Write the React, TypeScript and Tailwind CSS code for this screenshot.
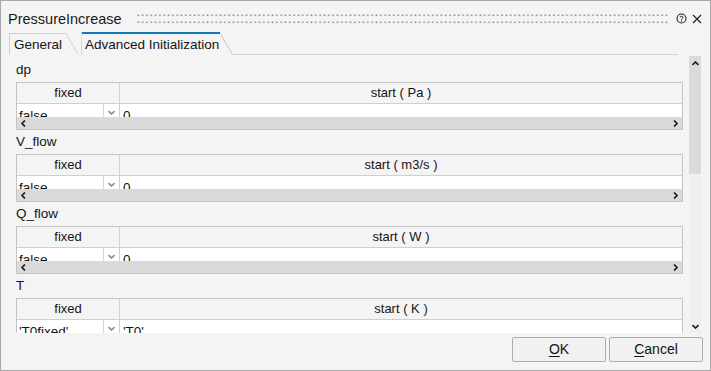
import React from "react";

const sections = [
  { name: "dp", unit: "Pa", fixed: "false", start: "0" },
  { name: "V_flow", unit: "m3/s", fixed: "false", start: "0" },
  { name: "Q_flow", unit: "W", fixed: "false", start: "0" },
  { name: "T", unit: "K", fixed: "'T0fixed'", start: "'T0'" },
];

function Chevron({ dir, className }: { dir: "left" | "right" | "up" | "down"; className?: string }) {
  const d =
    dir === "left"
      ? "M4 0.5 L1 3.5 L4 6.5"
      : dir === "right"
      ? "M1 0.5 L4 3.5 L1 6.5"
      : dir === "up"
      ? "M0.5 4 L3.5 1 L6.5 4"
      : "M0.5 1 L3.5 4 L6.5 1";
  const w = dir === "left" || dir === "right" ? 5 : 7;
  const h = dir === "left" || dir === "right" ? 7 : 5;
  return (
    <svg width={w} height={h} viewBox={`0 0 ${w} ${h}`} className={className}>
      <path d={d} fill="none" stroke="currentColor" strokeWidth="1.7" />
    </svg>
  );
}

function Section({ name, unit, fixed, start }: { name: string; unit: string; fixed: string; start: string }) {
  return (
    <div className="flex flex-col">
      <div className="h-[24px] flex items-center text-[13.5px] text-[#141414]">{name}</div>
      <div className="h-[48px] border border-[#c4c4c4] flex flex-col">
        <div className="flex h-[21px] border-b border-[#cfcfcf] text-[13px] text-[#141414]">
          <div className="w-[103px] border-r border-[#d2d2d2] flex items-center justify-center">fixed</div>
          <div className="flex-1 flex items-center justify-center">start ( {unit} )</div>
        </div>
        <div className="flex h-[13px] bg-white overflow-hidden text-[13.5px] text-[#141414] leading-[15px]">
          <div className="w-[87px] border-r border-[#d8d8d8] pl-[2px] pt-[4px] whitespace-nowrap">{fixed}</div>
          <div className="w-[16px] border-r border-[#cfcfcf] flex justify-center pt-[6px] text-[#8a8a8a]">
            <Chevron dir="down" />
          </div>
          <div className="flex-1 pl-[3px] pt-[4px] whitespace-nowrap">{start}</div>
        </div>
        <div className="h-[12px] bg-[#dadada] flex items-center justify-between pl-[4px] pr-[4px] text-[#202020]">
          <Chevron dir="left" />
          <Chevron dir="right" />
        </div>
      </div>
    </div>
  );
}

function Grip() {
  return (
    <svg className="w-full h-[10px]">
      <defs>
        <pattern id="dots" x="0" y="0" width="4.33" height="10" patternUnits="userSpaceOnUse">
          <rect x="0.5" y="0.5" width="1.6" height="1.6" fill="#8e8e8e" />
          <rect x="0.5" y="7.5" width="1.6" height="1.6" fill="#8e8e8e" />
        </pattern>
      </defs>
      <rect width="100%" height="10" fill="url(#dots)" />
    </svg>
  );
}

export default function App() {
  return (
    <div
      className="w-[711px] h-[371px] border border-[#a8a8a8] bg-[#f4f4f4] flex flex-col overflow-hidden"
      style={{ fontFamily: '"Liberation Sans", Arial, sans-serif' }}
    >
      {/* Title bar */}
      <div className="h-[31px] flex items-start shrink-0">
        <div className="pl-[7px] pt-[10px] text-[14.5px] leading-[17px] text-[#1a1a1a]">PressureIncrease</div>
        <div className="flex-1 mt-[13px] ml-[15px] mr-[8px]">
          <Grip />
        </div>
        <svg width="11" height="11" viewBox="0 0 11 11" className="mt-[12px] text-[#222]">
          <circle cx="5.5" cy="5.5" r="4.5" fill="none" stroke="currentColor" strokeWidth="1.1" />
          <path d="M4 4.4 C4 2.8 7 2.8 7 4.4 C7 5.5 5.5 5.4 5.5 6.6" fill="none" stroke="currentColor" strokeWidth="1" />
          <circle cx="5.5" cy="8" r="0.65" fill="currentColor" />
        </svg>
        <svg width="10" height="10" viewBox="0 0 10 10" className="mt-[13px] ml-[5px] mr-[8px] text-[#222]">
          <path d="M1 1 L9 9 M9 1 L1 9" stroke="currentColor" strokeWidth="1.2" />
        </svg>
      </div>

      {/* Tabs */}
      <div className="h-[23px] flex items-end shrink-0 text-[13.5px] text-[#141414]">
        <div className="ml-[8px] flex items-end h-[22px]">
          <div className="h-[22px] w-[57px] border-l border-t border-[#cfcfcf] pl-[4px] flex items-center pt-[1px]">
            General
          </div>
          <svg width="13" height="22" viewBox="0 0 13 22">
            <path d="M0 0.5 L12 21.5" stroke="#cfcfcf" strokeWidth="1" fill="none" />
          </svg>
        </div>
        <div className="ml-[2px] flex items-end h-[23px]">
          <div className="h-[23px] w-[139px] border-l border-[#d6d6d6] flex flex-col">
            <div className="h-[2px] bg-[#0f7bb5]" />
            <div className="flex-1 pl-[3px] flex items-center pt-[1px] whitespace-nowrap">Advanced Initialization</div>
          </div>
          <svg width="13" height="23" viewBox="0 0 13 23">
            <path d="M0.3 1.5 L12.5 22.5" stroke="#c8c8c8" strokeWidth="1" fill="none" />
            <path d="M12.5 22.5 L13 22.5" stroke="#d4d4d4" strokeWidth="1" />
          </svg>
        </div>
        <div className="flex-1 h-[1px] bg-[#d6d6d6] mr-[32px]" />
      </div>

      {/* Content */}
      <div className="flex h-[278px] shrink-0">
        <div className="flex-1 overflow-hidden pl-[15px] pt-[3px] flex flex-col">
          {sections.map((s) => (
            <Section key={s.name} {...s} />
          ))}
        </div>
        <div className="w-[12px] ml-[6px] mr-[9px] mt-[1px] flex flex-col bg-[#efefef]">
          <div className="h-[118px] bg-[#dadada] flex justify-center pt-[5px] text-[#202020]">
            <Chevron dir="up" />
          </div>
          <div className="flex-1" />
          <div className="flex justify-center pb-[4px] text-[#202020]">
            <Chevron dir="down" />
          </div>
        </div>
      </div>

      {/* Buttons */}
      <div className="flex-1 flex justify-end items-start pt-[4px] pr-[7px] gap-[3px]">
        <button className="w-[94px] h-[25px] border border-[#adadad] rounded-[2px] bg-[#f1f1f1] text-[14px] text-[#141414] flex items-center justify-center">
          <span>
            <span className="underline underline-offset-2">O</span>K
          </span>
        </button>
        <button className="w-[94px] h-[25px] border border-[#adadad] rounded-[2px] bg-[#f1f1f1] text-[14px] text-[#141414] flex items-center justify-center">
          <span>
            <span className="underline underline-offset-2">C</span>ancel
          </span>
        </button>
      </div>
    </div>
  );
}
